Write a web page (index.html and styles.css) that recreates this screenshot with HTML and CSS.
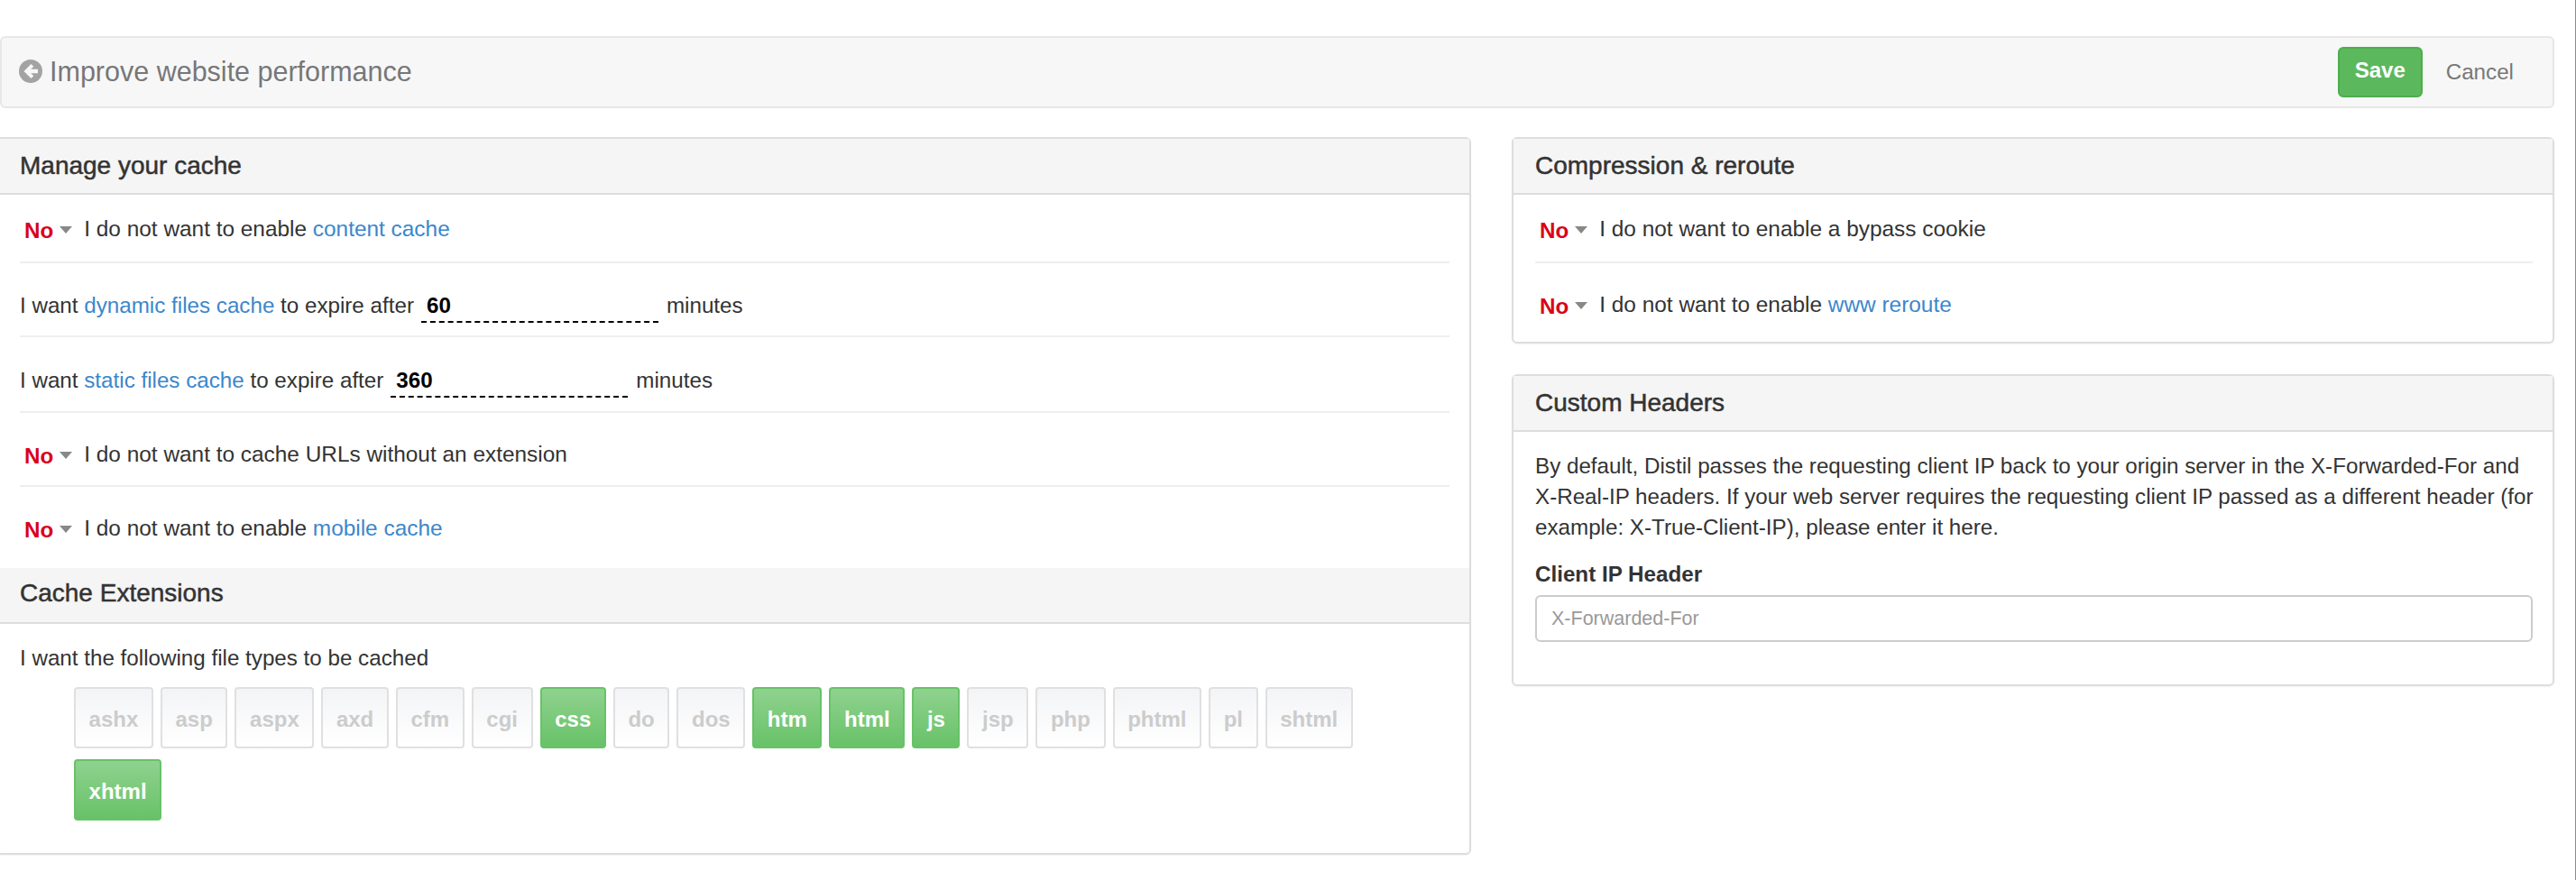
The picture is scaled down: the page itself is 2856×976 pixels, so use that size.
FILE: index.html
```html
<!DOCTYPE html>
<html lang="en">
<head>
<meta charset="utf-8">
<title>Improve website performance</title>
<link rel="stylesheet" href="styles.css">
</head>
<body>
<div class="page">
  <header class="topbar">
    <h1 class="page-title">
      <svg class="back-icon" viewBox="0 0 26 26" aria-hidden="true"><circle cx="13" cy="13" r="13" fill="#a3a3a3"/><path d="M13.5 5 L5.5 13 L13.5 21 L16.3 18.2 L13.2 15.2 L21 15.2 L21 10.8 L13.2 10.8 L16.3 7.8 Z" fill="#f7f7f7"/></svg>
      Improve website performance
    </h1>
    <div class="actions">
      <button class="btn-save">Save</button>
      <a class="cancel">Cancel</a>
    </div>
  </header>
  <main class="columns">
    <section class="panel cache">
      <h2 class="panel-head">Manage your cache</h2>
      <div class="rows">
        <div class="row r1"><span class="toggle">No</span><span class="caret"></span><span class="label">I do not want to enable <a class="link">content cache</a></span></div>
        <div class="row r2">I want&nbsp;<a class="link">dynamic files cache</a>&nbsp;to expire after<span class="field">60</span>minutes</div>
        <div class="row r3">I want&nbsp;<a class="link">static files cache</a>&nbsp;to expire after<span class="field">360</span>minutes</div>
        <div class="row r4"><span class="toggle">No</span><span class="caret"></span><span class="label">I do not want to cache URLs without an extension</span></div>
        <div class="row r5"><span class="toggle">No</span><span class="caret"></span><span class="label">I do not want to enable <a class="link">mobile cache</a></span></div>
      </div>
      <h2 class="panel-head sub">Cache Extensions</h2>
      <div class="ext-body">
        <p class="ext-intro">I want the following file types to be cached</p>
        <div class="chips">
          <span class="chip">ashx</span><span class="chip">asp</span><span class="chip">aspx</span><span class="chip">axd</span><span class="chip">cfm</span><span class="chip">cgi</span><span class="chip on">css</span><span class="chip">do</span><span class="chip">dos</span><span class="chip on">htm</span><span class="chip on">html</span><span class="chip on">js</span><span class="chip">jsp</span><span class="chip">php</span><span class="chip">phtml</span><span class="chip">pl</span><span class="chip">shtml</span><span class="chip on">xhtml</span>
        </div>
      </div>
    </section>
    <div class="side">
      <section class="panel compress">
        <h2 class="panel-head">Compression &amp; reroute</h2>
        <div class="rows">
          <div class="row r1"><span class="toggle">No</span><span class="caret"></span><span class="label">I do not want to enable a bypass cookie</span></div>
          <div class="row r6"><span class="toggle">No</span><span class="caret"></span><span class="label">I do not want to enable <a class="link">www reroute</a></span></div>
        </div>
      </section>
      <section class="panel headers">
        <h2 class="panel-head">Custom Headers</h2>
        <div class="headers-body">
          <p class="desc">By default, Distil passes the requesting client IP back to your origin server in the X-Forwarded-For and X-Real-IP headers. If your web server requires the requesting client IP passed as a different header (for example: X-True-Client-IP), please enter it here.</p>
          <label class="field-label" for="cip">Client IP Header</label>
          <input class="text-input" id="cip" placeholder="X-Forwarded-For">
        </div>
      </section>
    </div>
  </main>
</div>
</body>
</html>
```
FILE: styles.css
```css
* { box-sizing: border-box; }
html, body { margin: 0; padding: 0; background: #fff; }
body {
  font-family: "Liberation Sans", Arial, sans-serif;
  font-size: 24.2px;
  line-height: 34px;
  color: #333;
}
.page {
  width: 2856px;
  height: 976px;
  padding: 40px 23px 0 0;
  border-right: 1px solid #8a8a8a;
  overflow: hidden;
}
.topbar {
  display: flex;
  align-items: center;
  justify-content: space-between;
  height: 80px;
  padding: 0 43px 0 19px;
  background: #f7f7f7;
  border: 2px solid #e7e7e7;
  border-radius: 6px;
}
.page-title {
  display: flex;
  align-items: center;
  gap: 8px;
  margin: 0 0 2px;
  font-size: 30.5px;
  font-weight: 400;
  color: #777;
}
.back-icon { width: 26px; height: 26px; flex: none; }
.actions { display: flex; align-items: center; gap: 26px; }
.btn-save {
  width: 94px;
  height: 56px;
  padding: 0 0 4px;
  font: bold 24px "Liberation Sans", Arial, sans-serif;
  color: #fff;
  background: #5cb85c;
  border: 2px solid #4cae4c;
  border-radius: 6px;
}
.cancel { color: #777; }
.columns {
  display: grid;
  grid-template-columns: 1631px 1fr;
  gap: 45px;
  margin-top: 32px;
}
.panel {
  background: #fff;
  border: 2px solid #ddd;
  border-radius: 6px;
  box-shadow: 0 1px 2px rgba(0, 0, 0, 0.05);
}
.panel.cache { margin-left: -4px; height: 796px; }
.panel-head {
  height: 62px;
  margin: 0;
  padding: 13px 24px 0;
  font-size: 28px;
  font-weight: 400;
  -webkit-text-stroke: 0.5px #333;
  line-height: 34px;
  background: #f5f5f5;
  border-bottom: 2px solid #ddd;
}
.panel-head.sub { padding-top: 11px; }
.rows { padding: 0 22px 0 24px; }
.row {
  display: flex;
  align-items: flex-start;
  white-space: pre;
  border-bottom: 2px solid #eee;
}
.row:last-child { border-bottom: 0; }
.r1 { height: 76px; padding-top: 21px; }
.r2 { height: 82px; padding-top: 30px; }
.r3 { height: 84px; padding-top: 31px; }
.r4 { height: 82px; padding-top: 29px; }
.r5 { height: 90px; padding-top: 29px; }
.r6 { height: 87px; padding-top: 29px; }
.label { font-size: 24.4px; }
.toggle {
  margin: 2px 0 0 5px;
  font-weight: 700;
  color: #d9001b;
}
.caret {
  width: 0;
  height: 0;
  margin: 14px 13px 0 7px;
  border-left: 7px solid transparent;
  border-right: 7px solid transparent;
  border-top: 8px solid #888;
}
.link { color: #3b87cc; }
.field {
  display: block;
  width: 263px;
  height: 36px;
  margin: 0 9px 0 8px;
  padding: 0 6px;
  font-weight: 700;
  color: #000;
  border-bottom: 2px dashed #000;
}
.ext-body { padding: 21px 22px 35px 24px; }
.ext-intro { margin: 0 0 15px; }
.chips {
  display: flex;
  flex-wrap: wrap;
  gap: 12px 8px;
  padding: 0 60px;
}
.chip {
  height: 68px;
  padding: 17px 14.6px 0;
  font-size: 24px;
  font-weight: 700;
  color: #ccc;
  background: linear-gradient(#f3f4f6, #fff);
  border: 2px solid #e0e0e0;
  border-radius: 4px;
}
.chip.on {
  color: #fff;
  background: linear-gradient(#8fd28f, #68c268);
  border-color: #68c268;
}
.side { display: flex; flex-direction: column; gap: 34px; }
.headers-body { padding: 21px 22px 47px 24px; }
.desc { margin: 0 -10px 18px 0; }
.field-label { display: block; margin-bottom: 6px; font-weight: 700; }
.text-input {
  display: block;
  width: 100%;
  height: 52px;
  padding: 0 16px;
  font: 21.5px "Liberation Sans", Arial, sans-serif;
  color: #333;
  border: 2px solid #ccc;
  border-radius: 6px;
}
.text-input::placeholder { color: #999; opacity: 1; }
```
